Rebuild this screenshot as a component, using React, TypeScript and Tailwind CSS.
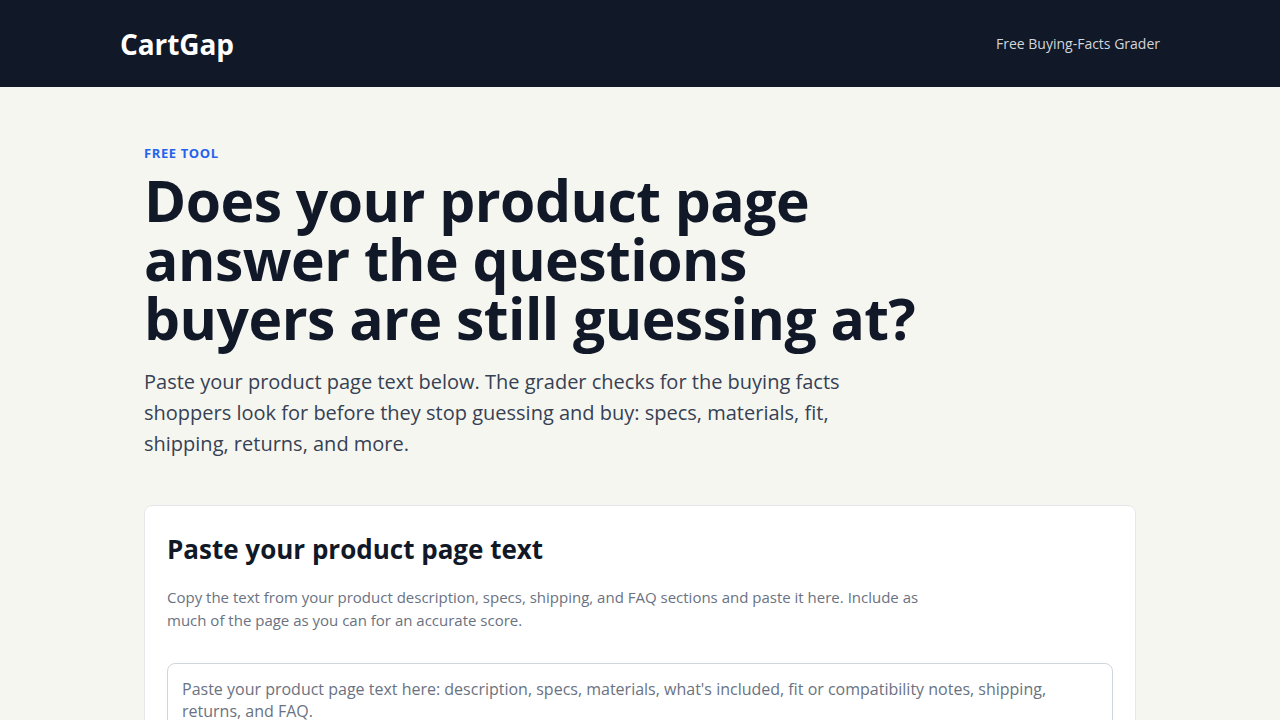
export default function App() {
  return (
    <div
      className="min-h-screen bg-[#f6f6f1] text-gray-900"
      style={{ fontFamily: '"Open Sans", "Noto Sans", sans-serif' }}
    >
      <header className="bg-[#111827]">
        <div className="mx-auto flex h-[87px] max-w-[1040px] items-center justify-between">
          <a className="text-[28px] font-bold tracking-[-0.1px] text-white">CartGap</a>
          <nav className="text-[14px] text-gray-300">Free Buying-Facts Grader</nav>
        </div>
      </header>

      <main className="mx-auto max-w-[1040px] px-6 pt-[57px]">
        <p className="text-[13px] font-bold uppercase tracking-[0.6px] text-[#2563eb]">
          Free tool
        </p>
        <h1 className="mt-[7px] max-w-[790px] text-[57px] font-bold leading-[59px] tracking-[-0.5px] text-[#111827]">
          Does your product page answer the questions buyers are still guessing at?
        </h1>
        <p className="mt-[18px] max-w-[740px] text-[20px] leading-[31px] text-gray-700">
          Paste your product page text below. The grader checks for the buying facts shoppers
          look for before they stop guessing and buy: specs, materials, fit, shipping, returns,
          and more.
        </p>

        <section className="mt-[46px] rounded-[8px] border border-gray-200 bg-white p-[22px]">
          <h2 className="mt-[4px] text-[26px] font-bold leading-[34px] text-[#111827]">
            Paste your product page text
          </h2>
          <p className="mt-[20px] max-w-[760px] text-[15px] leading-[23px] text-gray-500">
            Copy the text from your product description, specs, shipping, and FAQ sections and
            paste it here. Include as much of the page as you can for an accurate score.
          </p>
          <textarea
            className="mt-[31px] block h-[200px] w-full resize-none rounded-[8px] border border-gray-300 px-[14px] py-[14px] text-[16px] leading-[22.5px] text-gray-900 placeholder:text-gray-500"
            placeholder="Paste your product page text here: description, specs, materials, what's included, fit or compatibility notes, shipping, returns, and FAQ."
          />
        </section>
      </main>
    </div>
  );
}
